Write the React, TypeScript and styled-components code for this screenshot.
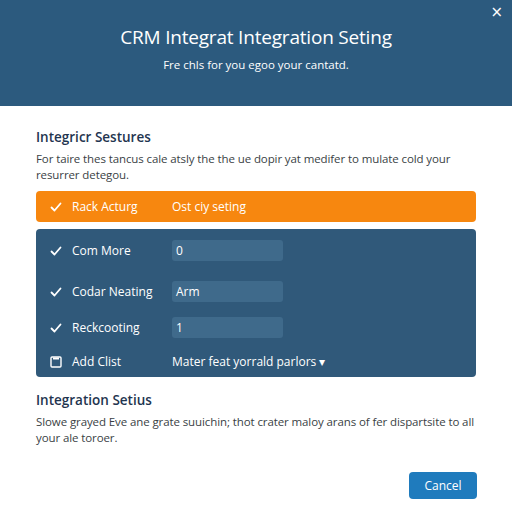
import React from "react";
import styled, { createGlobalStyle } from "styled-components";

const GlobalStyle = createGlobalStyle`
  html, body {
    margin: 0;
    padding: 0;
    background: #ffffff;
    font-family: "Open Sans", "Noto Sans", Arial, sans-serif;
  }
`;

const Page = styled.div`
  width: 512px;
  height: 512px;
  display: flex;
  flex-direction: column;
  background: #ffffff;
  overflow: hidden;
`;

const Header = styled.header`
  position: relative;
  height: 106px;
  background: #2c5a7e;
  display: flex;
  flex-direction: column;
  align-items: center;
  padding-top: 24px;
  box-sizing: border-box;
  color: #ffffff;
`;

const Title = styled.h1`
  margin: 0;
  font-size: 19px;
  font-weight: 400;
  letter-spacing: -0.2px;
`;

const Subtitle = styled.p`
  margin: 7px 0 0;
  font-size: 11.5px;
`;

const CloseButton = styled.button`
  position: absolute;
  top: 5px;
  right: 9px;
  border: 0;
  background: none;
  color: #ffffff;
  font-size: 15px;
  padding: 0;
  line-height: 1;
  cursor: pointer;
  font-family: "DejaVu Sans", sans-serif;
`;

const Body = styled.main`
  padding: 22px 36px 0;
  display: flex;
  flex-direction: column;
`;

const SectionTitle = styled.h2<{ $gap?: number }>`
  margin: ${(p) => p.$gap ?? 0}px 0 0;
  font-size: 13.5px;
  font-weight: 600;
  color: #1f3550;
`;

const SectionText = styled.p`
  margin: 5px 0 0;
  font-size: 11.5px;
  line-height: 15.5px;
  letter-spacing: -0.1px;
  color: #3a3f45;
`;

const HighlightRow = styled.div`
  margin-top: 9px;
  height: 31px;
  background: #f7870f;
  border-radius: 4px;
  display: flex;
  align-items: center;
  padding-left: 14px;
  color: #ffffff;
  font-size: 12px;
`;

const Panel = styled.div`
  margin-top: 7px;
  background: #30597a;
  border-radius: 4px;
  padding: 11px 0 5px 14px;
  display: flex;
  flex-direction: column;
  color: #ffffff;
  font-size: 12px;
`;

const Row = styled.div<{ $gap?: number }>`
  height: 21px;
  margin-top: ${(p) => p.$gap ?? 0}px;
  display: flex;
  align-items: center;
`;

const Mark = styled.span`
  width: 22px;
  display: inline-flex;
  align-items: center;
`;

const Label = styled.span`
  width: 100px;
`;

const Field = styled.div`
  width: 111px;
  height: 21px;
  background: #3f6a8b;
  border-radius: 3px;
  display: flex;
  align-items: center;
  padding-left: 4px;
  box-sizing: border-box;
`;

const Footer = styled.div`
  margin-top: 27px;
  display: flex;
  justify-content: flex-end;
  padding-right: 35px;
`;

const CancelButton = styled.button`
  width: 68px;
  height: 27px;
  background: #1f7bbd;
  color: #ffffff;
  border: 0;
  border-radius: 4px;
  font-family: "Open Sans", "Noto Sans", Arial, sans-serif;
  font-size: 12px;
`;

const Check = () => (
  <svg width="12" height="12" viewBox="0 0 12 12">
    <path d="M1.5 6.5 L4.5 9.5 L10.5 2.5" fill="none" stroke="#fff" strokeWidth="1.8" strokeLinecap="round" strokeLinejoin="round" />
  </svg>
);

const Box = () => (
  <svg width="12" height="12" viewBox="0 0 12 12">
    <rect x="1" y="1" width="10" height="10" rx="1" fill="none" stroke="#fff" strokeWidth="1.4" />
    <path d="M3 1.5 H9 V3.5 H3 Z" fill="#fff" />
  </svg>
);

export default function App() {
  return (
    <Page>
      <GlobalStyle />
      <Header>
        <Title>CRM Integrat Integration Seting</Title>
        <Subtitle>Fre chls for you egoo your cantatd.</Subtitle>
        <CloseButton aria-label="Close">×</CloseButton>
      </Header>
      <Body>
        <SectionTitle>Integricr Sestures</SectionTitle>
        <SectionText>
          For taire thes tancus cale atsly the the ue dopir yat medifer to mulate cold your resurrer detegou.
        </SectionText>
        <HighlightRow>
          <Mark>
            <Check />
          </Mark>
          <Label>Rack Acturg</Label>
          <span>Ost ciy seting</span>
        </HighlightRow>
        <Panel>
          <Row>
            <Mark>
              <Check />
            </Mark>
            <Label>Com More</Label>
            <Field>0</Field>
          </Row>
          <Row $gap={20}>
            <Mark>
              <Check />
            </Mark>
            <Label>Codar Neating</Label>
            <Field>Arm</Field>
          </Row>
          <Row $gap={15}>
            <Mark>
              <Check />
            </Mark>
            <Label>Reckcooting</Label>
            <Field>1</Field>
          </Row>
          <Row $gap={13}>
            <Mark>
              <Box />
            </Mark>
            <Label>Add Clist</Label>
            <span>Mater feat yorrald parlors ▾</span>
          </Row>
        </Panel>
        <SectionTitle $gap={14}>Integration Setius</SectionTitle>
        <SectionText>
          Slowe grayed Eve ane grate suuichin; thot crater maloy arans of fer dispartsite to all your ale toroer.
        </SectionText>
      </Body>
      <Footer>
        <CancelButton>Cancel</CancelButton>
      </Footer>
    </Page>
  );
}
